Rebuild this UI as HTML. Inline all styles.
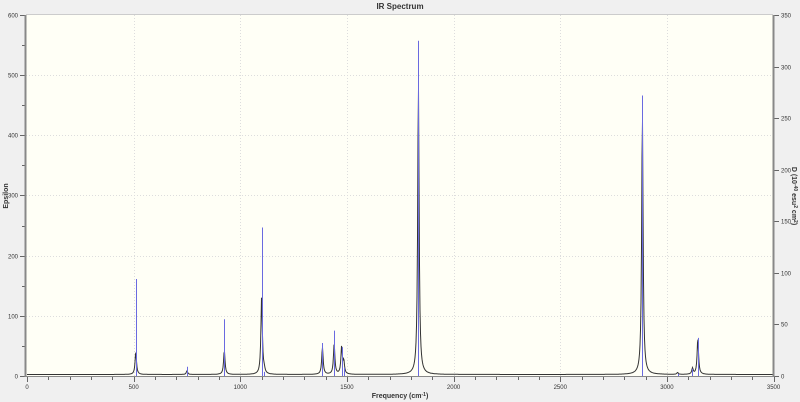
<!DOCTYPE html>
<html><head><meta charset="utf-8"><style>
html,body{margin:0;padding:0;background:#f0f0f0;width:800px;height:402px;overflow:hidden}
text{font-family:"Liberation Sans",sans-serif;font-size:6px;fill:#333}
</style></head><body>
<svg id="s" width="800" height="402" xmlns="http://www.w3.org/2000/svg">
<rect x="0" y="0" width="800" height="402" fill="#f0f0f0"/>
<rect x="26" y="15" width="747" height="361" fill="#fffff6"/>
<g id="grid" stroke="#ddd" stroke-dasharray="1,2" stroke-width="1"></g>
<g id="ticks" stroke="#666" stroke-width="1"></g>
<g id="lbl"></g>
<path id="curve" fill="none" stroke="#333" stroke-width="1"/>
<g id="sticks" stroke="#6a6ae0" stroke-width="1"></g>
<line x1="25.5" y1="15" x2="25.5" y2="377" stroke="#888" stroke-width="2"/>
<line x1="773.5" y1="15" x2="773.5" y2="377" stroke="#888" stroke-width="2"/>
<line x1="26" y1="376.5" x2="773" y2="376.5" stroke="#888" stroke-width="1"/>
<line x1="26" y1="14.5" x2="773" y2="14.5" stroke="#ccc" stroke-width="1"/>
<text x="400" y="9" text-anchor="middle" style="font-weight:bold;font-size:8px">IR Spectrum</text>
<text x="400" y="398" text-anchor="middle" style="font-weight:bold;font-size:7px">Frequency (cm<tspan dy="-2" style="font-size:5px">-1</tspan><tspan dy="2">)</tspan></text>
<text transform="translate(8,196) rotate(-90)" text-anchor="middle" style="font-weight:bold;font-size:7px">Epsilon</text>
<text transform="translate(792,196) rotate(90)" text-anchor="middle" style="font-weight:bold;font-size:7px">D (10<tspan dy="-2" style="font-size:5px">-40</tspan><tspan dy="2"> esu</tspan><tspan dy="-2" style="font-size:5px">2</tspan><tspan dy="2"> cm</tspan><tspan dy="-2" style="font-size:5px">2</tspan><tspan dy="2">)</tspan></text>
</svg>
<script>
var NS="http://www.w3.org/2000/svg";
function X(f){return 27+f*0.2133;}
function Y(e){return 376-e*0.6017;}
function YD(d){return 376-d*361/350;}
function el(p,t,a,txt){var e=document.createElementNS(NS,t);for(var k in a)e.setAttribute(k,a[k]);if(txt!=null)e.textContent=txt;document.getElementById(p).appendChild(e);}
for(var f=500;f<3500;f+=500){var x=Math.round(X(f))+.5;el("grid","line",{x1:x,y1:15,x2:x,y2:376});}
for(var e=100;e<600;e+=100){var y=Math.round(Y(e))+.5;el("grid","line",{x1:26,y1:y,x2:773,y2:y});}
for(var f=0;f<=3500;f+=100){var x=Math.round(X(f))+.5;el("ticks","line",{x1:x,y1:377,x2:x,y2:f%500==0?382:380});}
for(var f=0;f<=3500;f+=500){el("lbl","text",{x:X(f),y:389,"text-anchor":"middle"},f);}
for(var e=0;e<=600;e+=50){var y=Math.round(Y(e))+.5;el("ticks","line",{x1:e%100==0?20:22,y1:y,x2:25,y2:y});if(e%100==0)el("lbl","text",{x:18,y:y+2,"text-anchor":"end"},e);}
for(var d=0;d<=350;d+=50){var y=Math.round(YD(d))+.5;el("ticks","line",{x1:774,y1:y,x2:779,y2:y});el("lbl","text",{x:781,y:y+2},d);}
var P=[[510,38,94],[750,6,9],[925,40,55],[1100,130,144],[1112,6,4],[1385,45,32],[1440,50,44],[1475,45,28],[1485,20,8],[1835,480,325],[2885,430,272],[3050,3,2],[3120,10,7],[3145,60,37]];
var d="",w=4;
for(var px=27;px<=773;px+=0.5){var f=(px-27)/0.2133,s=2.5;for(var i=0;i<P.length;i++){var dx=f-P[i][0];s+=P[i][1]*w*w/(dx*dx+w*w);}d+=(d?"L":"M")+px.toFixed(1)+","+Y(s).toFixed(1);}
document.getElementById("curve").setAttribute("d",d);
for(var i=0;i<P.length;i++){var x=Math.round(X(P[i][0]))+.5;el("sticks","line",{x1:x,y1:376,x2:x,y2:YD(P[i][2])});}
</script>
</body></html>
